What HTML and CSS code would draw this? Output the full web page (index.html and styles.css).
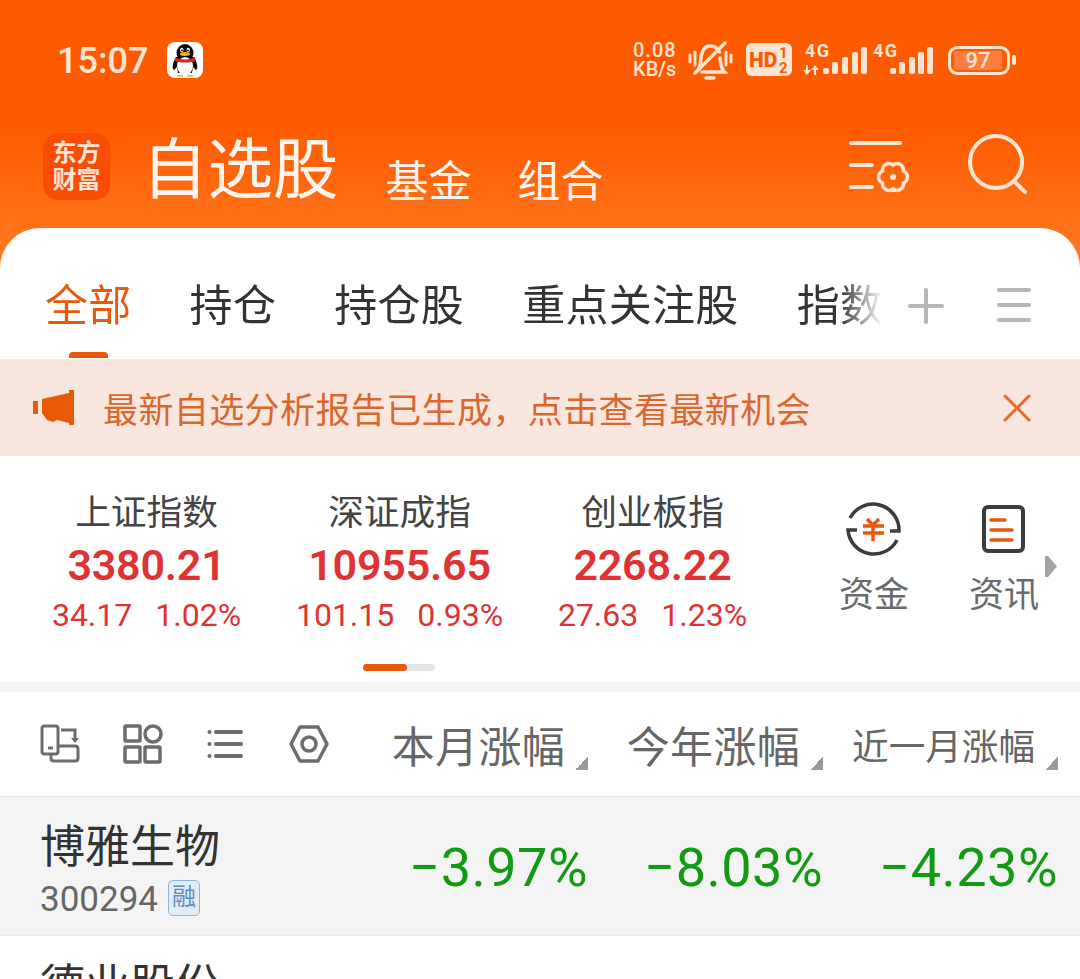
FILE: index.html
```html
<!DOCTYPE html>
<html lang="zh-CN">
<head>
    <meta charset="UTF-8">
    <meta name="viewport" content="width=device-width, initial-scale=1.0">
    <title>自选股</title>
    <link rel="stylesheet" href="styles.css">
</head>
<body>
    <div class="phone">
        <div class="status">
            <span class="time">15:07</span>
            <svg class="qq" width="36" height="36" viewBox="0 0 36 36">
                <rect width="36" height="36" rx="8" fill="#fff"/>
                <ellipse cx="18" cy="11" rx="8.5" ry="9" fill="#0c0c0c"/>
                <path d="M9 15C5 22 5 27 7 28l3-3 1 6h14l1-6 3 3c2-1 2-6-2-13z" fill="#0c0c0c"/>
                <ellipse cx="18" cy="24" rx="8" ry="9" fill="#fff"/>
                <ellipse cx="14.8" cy="8" rx="1.7" ry="2.3" fill="#fff"/>
                <ellipse cx="21.2" cy="8" rx="1.7" ry="2.3" fill="#fff"/>
                <circle cx="15" cy="8.4" r=".9" fill="#000"/>
                <circle cx="21" cy="8.4" r=".9" fill="#000"/>
                <ellipse cx="18" cy="12" rx="5" ry="1.9" fill="#f4b41a"/>
                <path d="M8 15.500c6 2.600 14 2.600 20 0l.5 3.400c-5 2.200-16 2.200-21 0z" fill="#d9261c"/>
                <path d="M10 33h6v1.500h-6zM20 33h6v1.500h-6z" fill="#f4b41a"/>
            </svg>
            <div class="net"><span class="net-num">0.08</span><span>KB/s</span></div>
            <svg class="sys" width="332" height="40" viewBox="0 0 332 40">
                <g fill="none" stroke="#fde4d3" stroke-linecap="round">
                    <path d="M2 15v7M7 12v13M38 12v13M43 15v7" stroke-width="3"/>
                    <path d="M8 32c3-2 4-5 4.500-10 .5-8 3-16 9.500-16 5 0 8 2 9.500 6M32 18c.5 6 1.500 11 4.500 14H14M18 38h8" stroke-width="3.500"/>
                    <path d="M7 33 37 3" stroke-width="3.500"/>
                </g>
                <rect x="58" y="3" width="46" height="33" rx="6" fill="#fde4d3"/>
                <text x="61" y="27" class="sys-hd">HD</text>
                <text x="91" y="18" class="sys-sub">1</text>
                <text x="91" y="33" class="sys-sub">2</text>
                <g fill="#fde4d3">
                    <text x="117" y="17" class="sys-4g">4G</text>
                    <path d="M118 25h2v5h3l-4 5-4-5h3zM126 35h2v-5h3l-4-5-4 5h3z"/>
                    <rect x="135" y="28" width="6" height="6" rx="2"/>
                    <rect x="144" y="22" width="6" height="12" rx="2"/>
                    <rect x="154" y="17" width="6" height="17" rx="2"/>
                    <rect x="164" y="12" width="6" height="22" rx="2"/>
                    <rect x="173" y="7" width="6" height="27" rx="2"/>
                    <text x="185" y="17" class="sys-4g">4G</text>
                    <rect x="202" y="28" width="6" height="6" rx="2"/>
                    <rect x="211" y="22" width="6" height="12" rx="2"/>
                    <rect x="221" y="17" width="6" height="17" rx="2"/>
                    <rect x="230" y="12" width="6" height="22" rx="2"/>
                    <rect x="239" y="7" width="6" height="27" rx="2"/>
                </g>
                <rect x="261.500" y="7.500" width="59" height="26" rx="8" fill="none" stroke="#fde4d3" stroke-width="3"/>
                <rect x="266" y="11" width="48" height="19" rx="2" fill="#fe7d3e"/>
                <text x="290" y="28" text-anchor="middle" class="batt-num">97</text>
                <rect x="324" y="15" width="4" height="10" rx="2" fill="#fde4d3"/>
            </svg>
        </div>

        <div class="titlebar">
            <div class="logo"><span>东方</span><span>财富</span></div>
            <span class="title">自选股</span>
            <span class="subtitle">基金</span>
            <span class="subtitle">组合</span>
            <svg class="tool-set" width="62" height="56" viewBox="0 0 62 56" fill="none" stroke="#fde4d3" stroke-linecap="round">
                <path d="M2 3h49M2 25h21M2 47h21" stroke-width="4"/>
                <path d="M54.400 31a6.500 6.500 0 0 1 0 12 6.500 6.500 0 0 1-10.400 6 6.500 6.500 0 0 1-10.400-6 6.500 6.500 0 0 1 0-12 6.500 6.500 0 0 1 10.400-6 6.500 6.500 0 0 1 10.400 6z" stroke-width="3.500"/>
                <circle cx="44" cy="37" r="3" fill="#fde4d3" stroke="none"/>
            </svg>
            <svg class="tool-search" width="60" height="60" viewBox="0 0 60 60" fill="none" stroke="#fde4d3" stroke-width="4" stroke-linecap="round">
                <circle cx="28" cy="28" r="26"/>
                <path d="M46 47 57 58"/>
            </svg>
        </div>

        <div class="sheet">
            <div class="tabs">
                <div class="tab-list">
                    <span class="tab tab-on">全部</span>
                    <span class="tab">持仓</span>
                    <span class="tab">持仓股</span>
                    <span class="tab">重点关注股</span>
                    <span class="tab">指数</span>
                </div>
                <svg class="tab-plus" width="36" height="36" viewBox="0 0 36 36" stroke="#b6b6b6" stroke-width="4" stroke-linecap="round">
                    <path d="M2 18h32M18 2v32"/>
                </svg>
                <svg class="tab-menu" width="34" height="34" viewBox="0 0 34 34" stroke="#b6b6b6" stroke-width="4" stroke-linecap="round">
                    <path d="M2 2h30M2 17h30M2 32h30"/>
                </svg>
            </div>

            <div class="notice">
                <svg width="42" height="38" viewBox="0 0 42 38" fill="#e85a06">
                    <rect x="0" y="12" width="5" height="13"/>
                    <path d="M9 10 36 4V1h5v35h-5v-2L24 31l-4 2-6-2-5-7z"/>
                </svg>
                <span class="notice-text">最新自选分析报告已生成，点击查看最新机会</span>
                <svg class="notice-close" width="28" height="28" viewBox="0 0 28 28" stroke="#e8692c" stroke-width="3" stroke-linecap="round">
                    <path d="M2 2 26 26M26 2 2 26"/>
                </svg>
            </div>

            <div class="market">
                <div class="indexes">
                    <div class="index">
                        <div class="index-name">上证指数</div>
                        <div class="index-val">3380.21</div>
                        <div class="index-sub"><span>34.17</span><span>1.02%</span></div>
                    </div>
                    <div class="index">
                        <div class="index-name">深证成指</div>
                        <div class="index-val">10955.65</div>
                        <div class="index-sub"><span>101.15</span><span>0.93%</span></div>
                    </div>
                    <div class="index">
                        <div class="index-name">创业板指</div>
                        <div class="index-val">2268.22</div>
                        <div class="index-sub"><span>27.63</span><span>1.23%</span></div>
                    </div>
                    <div class="shortcut shortcut-first">
                        <svg width="56" height="56" viewBox="0 0 56 56" fill="none">
                            <path d="M4 17A26 26 0 0 1 53 30H44M51 39A26 26 0 0 1 2 29H11" stroke="#3c3c3c" stroke-width="3.500"/>
                            <path d="M21 18l6 6 6-6M17 25h21M17 32h21M27 24v16" stroke="#e8590c" stroke-width="3.500"/>
                        </svg>
                        <span>资金</span>
                    </div>
                    <div class="shortcut">
                        <svg width="56" height="56" viewBox="0 0 56 56" fill="none">
                            <rect x="8" y="6" width="39" height="44" rx="4" stroke="#3c3c3c" stroke-width="4"/>
                            <path d="M15 19h14M15 29h21M15 39h21" stroke="#e8590c" stroke-width="3.500" stroke-linecap="round"/>
                        </svg>
                        <span>资讯</span>
                    </div>
                    <svg class="more" width="14" height="23" viewBox="0 0 14 23"><path d="M1 1h3l9 10.500-9 10.500H1z" fill="#a3a3a3"/></svg>
                </div>
                <div class="pager"><i></i></div>
            </div>

            <div class="toolbar">
                <div class="tools">
                    <svg width="40" height="40" viewBox="0 0 40 40" fill="none" stroke="#6c6c6c" stroke-width="3">
                        <rect x="2" y="2" width="16" height="28" rx="2.500"/>
                        <path d="M18 22h17q3 0 3 3v9q0 3-3 3H14q-3 0-3-3v-4M8 24h5M21 6h14v10"/>
                        <path d="M31 14h8l-4 5z" fill="#6c6c6c" stroke="none"/>
                    </svg>
                    <svg width="40" height="40" viewBox="0 0 40 40" fill="none" stroke="#6c6c6c" stroke-width="3.500">
                        <rect x="2" y="2" width="15" height="15" rx="1"/>
                        <circle cx="30" cy="10" r="8"/>
                        <rect x="2" y="23" width="15" height="15" rx="1"/>
                        <rect x="22" y="23" width="15" height="15" rx="1"/>
                    </svg>
                    <svg width="40" height="40" viewBox="0 0 40 40" stroke="#6c6c6c" stroke-width="4" stroke-linecap="round">
                        <path d="M10 8h25M10 20h25M10 32h25"/>
                        <circle cx="3.500" cy="8" r="2" fill="#6c6c6c" stroke="none"/>
                        <circle cx="3.500" cy="20" r="2" fill="#6c6c6c" stroke="none"/>
                        <circle cx="3.500" cy="32" r="2" fill="#6c6c6c" stroke="none"/>
                    </svg>
                    <svg width="40" height="40" viewBox="0 0 40 40" fill="none" stroke="#6c6c6c" stroke-width="3.500">
                        <path d="M11 3h18l9 17-9 17H11L2 20z" stroke-linejoin="round"/>
                        <circle cx="20" cy="20" r="7"/>
                    </svg>
                </div>
                <div class="col-head"><span>本月涨幅</span><i></i></div>
                <div class="col-head"><span>今年涨幅</span><i></i></div>
                <div class="col-head col-small"><span>近一月涨幅</span><i></i></div>
            </div>

            <div class="stock stock-on">
                <div class="stock-info">
                    <div class="stock-name">博雅生物</div>
                    <div class="stock-code">300294<span class="tag">融</span></div>
                </div>
                <div class="stock-val">−3.97%</div>
                <div class="stock-val">−8.03%</div>
                <div class="stock-val">−4.23%</div>
            </div>
            <div class="stock">
                <div class="stock-info">
                    <div class="stock-name">德业股份</div>
                </div>
            </div>
        </div>
    </div>
</body>
</html>
```

FILE: styles.css
```css
* {
    box-sizing: border-box;
}
html, body {
    margin: 0;
    padding: 0;
}
body {
    font-family: Roboto, "Noto Sans CJK SC", sans-serif;
    background: #fff;
}
svg {
    display: block;
    flex: none;
}
.phone {
    width: 1080px;
    height: 979px;
    overflow: hidden;
    background: linear-gradient(#fe5a00 0, #fe5a00 125px, #ff7c24 270px);
}

/* status bar */
.status {
    height: 120px;
    padding-left: 57px;
    display: flex;
    align-items: center;
    color: #fde4d3;
}
.time {
    font-size: 36px;
    font-weight: 500;
    width: 110px;
    margin-top: 2px;
}
.net {
    margin-left: 430px;
    width: 55px;
    display: flex;
    flex-direction: column;
    font-size: 20px;
    font-weight: 500;
    line-height: 19px;
}
.net-num {
    letter-spacing: 1px;
}
.sys-hd {
    font-size: 21px;
    font-weight: 900;
    fill: #fe5a00;
}
.sys-sub {
    font-size: 15px;
    font-weight: 700;
    fill: #fe5a00;
}
.sys-4g {
    font-size: 18px;
    font-weight: 700;
    letter-spacing: 1.5px;
}
.batt-num {
    font-size: 22px;
    font-weight: 500;
    fill: #fde4d3;
}

/* title row */
.titlebar {
    height: 108px;
    padding: 13px 0 0 43px;
    display: flex;
    align-items: flex-start;
    color: #fff5ee;
}
.logo {
    width: 67px;
    height: 67px;
    border-radius: 15px;
    background: #f94c06;
    color: #fde4d3;
    font-size: 24px;
    font-weight: 700;
    line-height: 27px;
    display: flex;
    flex-direction: column;
    align-items: center;
    justify-content: center;
}
.title {
    margin-left: 32px;
    font-size: 65.5px;
    line-height: 76px;
}
.subtitle {
    margin: 15px 0 0 47px;
    font-size: 43px;
    line-height: 68px;
}
.subtitle + .subtitle {
    margin-left: 46px;
}
.tool-set {
    margin: 7px 0 0 245px;
}
.tool-search {
    margin: 1px 0 0 57px;
}

/* tabs */
.sheet {
    background: #fff;
    border-radius: 40px 40px 0 0;
    height: 751px;
    overflow: hidden;
}
.tabs {
    height: 132px;
    padding: 53px 0 0 45px;
    display: flex;
    border-bottom: 1px solid #eeeeee;
}
.tab-list {
    width: 840px;
    display: flex;
    gap: 58px;
    overflow: hidden;
    white-space: nowrap;
    mask-image: linear-gradient(to right, #000 795px, transparent 838px);
}
.tab {
    font-size: 43px;
    letter-spacing: 0.3px;
    line-height: 50px;
    color: #333;
    flex: none;
}
.tab-on {
    color: #e8590c;
}
.tab-on::after {
    content: "";
    display: block;
    width: 39px;
    height: 6px;
    margin: 21px auto 0;
    background: #e8590c;
    border-radius: 4px 4px 0 0;
}
.tab-plus {
    margin: 7px 0 0 23px;
}
.tab-menu {
    margin: 7px 0 0 53px;
}

/* notice */
.notice {
    height: 96px;
    padding-left: 33px;
    display: flex;
    align-items: center;
    background: #f8e6df;
}
.notice-text {
    margin-left: 28px;
    width: 900px;
    font-size: 35px;
    letter-spacing: 0.4px;
    color: #d9682e;
    line-height: 48px;
    padding-top: 8px;
}

/* market indexes */
.market {
    height: 226px;
    background: #fff;
}
.indexes {
    height: 208px;
    padding-left: 20px;
    display: flex;
}
.index {
    width: 253px;
    padding-top: 33px;
    text-align: center;
    color: #e03232;
}
.index-name {
    font-size: 35.7px;
    line-height: 48px;
    color: #444;
    margin-bottom: 2px;
}
.index-val {
    font-size: 43px;
    letter-spacing: -0.2px;
    line-height: 52px;
    font-weight: 600;
}
.index-sub {
    margin-top: 4px;
    font-size: 32px;
    line-height: 40px;
    display: flex;
    justify-content: center;
    gap: 23px;
}
.shortcut {
    width: 130px;
    padding-top: 45px;
    display: flex;
    flex-direction: column;
    align-items: center;
    font-size: 35px;
    line-height: 48px;
    color: #6a6a6a;
}
.shortcut span {
    margin-top: 15px;
}
.shortcut-first {
    margin-left: 30px;
}
.more {
    margin: 99px 0 0 -25px;
}
.pager {
    width: 72px;
    height: 7px;
    margin-left: 363px;
    border-radius: 4px;
    background: #e6e6e6;
}
.pager i {
    display: block;
    width: 44px;
    height: 7px;
    border-radius: 4px;
    background: #e8590c;
}

/* list header */
.toolbar {
    height: 115px;
    margin-top: 0;
    border-top: 10px solid #f6f6f6;
    border-bottom: 1px solid #e8e8e8;
    display: flex;
    align-items: center;
    padding-left: 40px;
}
.tools {
    width: 313px;
    display: flex;
    gap: 43px;
}
.col-head {
    width: 235px;
    height: 70px;
    display: flex;
    align-items: center;
    justify-content: flex-end;
    font-size: 43px;
    letter-spacing: 0.3px;
    color: #666;
}
.col-small {
    font-size: 36.6px;
    letter-spacing: 0;
}
.col-head i {
    width: 13px;
    height: 13px;
    margin: 38px 0 0 10px;
    background: linear-gradient(135deg, transparent 50%, #9a9a9a 50%);
}

/* stock rows */
.stock {
    height: 139px;
    padding: 24px 22px 0 40px;
    display: flex;
    border-bottom: 1px solid #ececec;
}
.stock-on {
    background: #f4f4f4;
}
.stock-info {
    width: 313px;
}
.stock-name {
    font-size: 45px;
    line-height: 54px;
    color: #333;
}
.stock-code {
    margin-top: 5px;
    display: flex;
    align-items: center;
    font-size: 35px;
    line-height: 40px;
    color: #666;
}
.tag {
    width: 32px;
    height: 36px;
    margin: 0 0 4px 10px;
    border: 1px solid #8ab4dc;
    border-radius: 5px;
    background: #e3edf6;
    color: #5b8fc4;
    font-size: 24px;
    line-height: 33px;
    text-align: center;
}
.stock-val {
    width: 235px;
    padding-top: 17px;
    text-align: right;
    font-size: 54px;
    letter-spacing: 0.5px;
    line-height: 60px;
    color: #129a12;
}
```
